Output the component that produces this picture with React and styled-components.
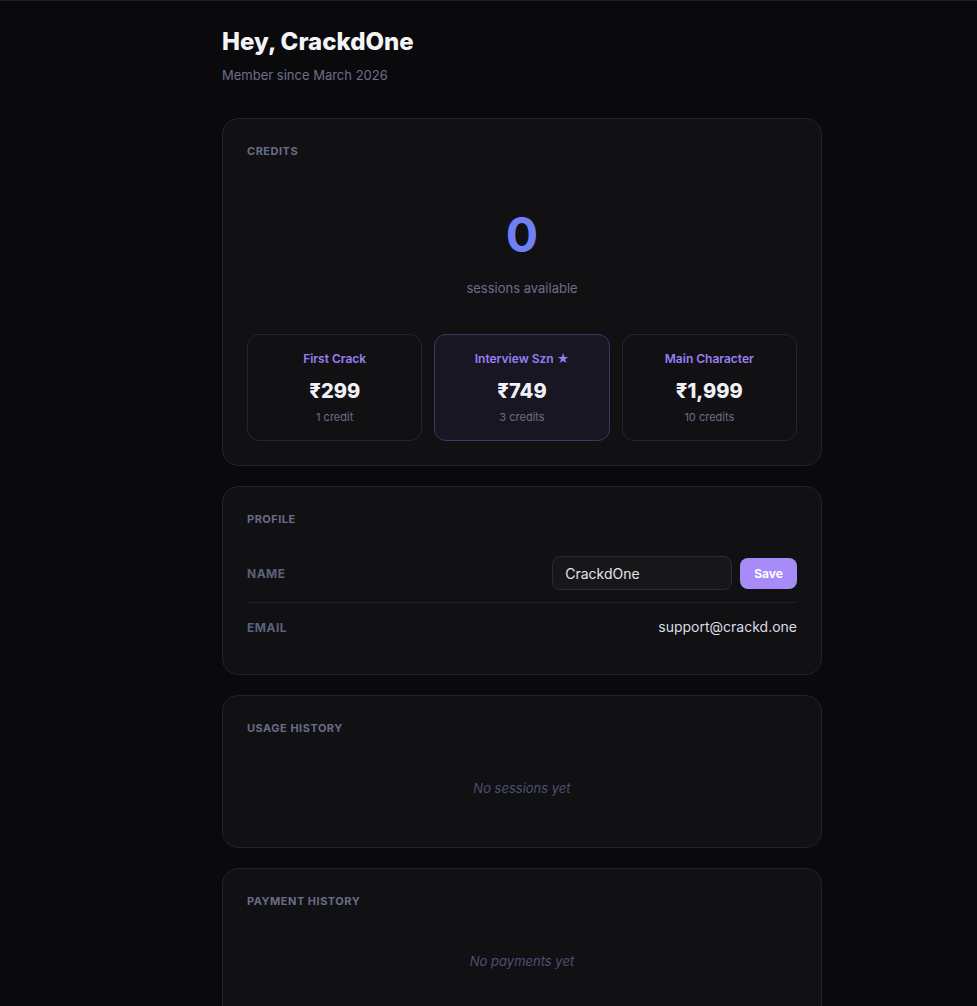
import React from 'react';
import styled, { createGlobalStyle } from 'styled-components';

const GlobalStyle = createGlobalStyle`
  html, body {
    margin: 0;
    padding: 0;
    background: #0a0a0c;
  }
  body {
    border-top: 1px solid #1d1d22;
    font-family: Inter, "Noto Sans", sans-serif;
    color: #e4e4e7;
    min-height: 1006px;
    box-sizing: border-box;
  }
`;

const Page = styled.div`
  padding: 25px 0 40px 222px;
`;

const Main = styled.main`
  width: 600px;
  display: flex;
  flex-direction: column;
  gap: 20px;
`;

const Header = styled.header`
  margin-bottom: 13px;
`;

const Title = styled.h1`
  margin: 0;
  font-size: 24px;
  line-height: 32px;
  font-weight: 800;
  color: #f4f4f7;
`;

const Subtitle = styled.p`
  margin: 7px 0 0;
  font-size: 13px;
  line-height: 20px;
  color: #6b6f87;
`;

const Card = styled.section`
  background: #111114;
  border: 1px solid #222227;
  border-radius: 16px;
  padding: 24px;
`;

const CardLabel = styled.h2`
  margin: 0 0 16px;
  font-size: 11px;
  line-height: 16px;
  font-weight: 700;
  letter-spacing: 0.5px;
  text-transform: uppercase;
  color: #686d87;
`;

const Balance = styled.div`
  display: flex;
  flex-direction: column;
  align-items: center;
  padding: 36px 0 36px;
`;

const BalanceValue = styled.div`
  font-size: 48px;
  line-height: 48px;
  font-weight: 700;
  color: #6f80f5;
`;

const BalanceCaption = styled.div`
  margin-top: 19px;
  font-size: 13px;
  line-height: 20px;
  color: #6b6f87;
`;

const PlanGrid = styled.div`
  display: grid;
  grid-template-columns: repeat(3, 1fr);
  gap: 12px;
`;

const Plan = styled.button`
  display: flex;
  flex-direction: column;
  align-items: center;
  padding: 16px 8px 15px;
  border-radius: 12px;
  font-family: inherit;
  cursor: pointer;
  background: ${p => (p.$featured ? '#181622' : '#111114')};
  border: 1px solid ${p => (p.$featured ? '#3f3763' : '#25252b')};
`;

const PlanName = styled.div`
  font-size: 12px;
  line-height: 16px;
  font-weight: 600;
  color: #9b7ef5;
`;

const PlanPrice = styled.div`
  margin-top: 10px;
  font-size: 20px;
  line-height: 28px;
  font-weight: 800;
  color: #f1f1f5;
`;

const PlanCredits = styled.div`
  margin-top: 4px;
  font-size: 11px;
  line-height: 16px;
  color: #6b6f87;
`;

const Rows = styled.div`
  padding-top: 1px;
`;

const Row = styled.div`
  display: flex;
  align-items: center;
  justify-content: space-between;
  padding: ${p => (p.$last ? '13px 0 11px' : '12px 0')};
  border-bottom: 1px solid ${p => (p.$last ? 'transparent' : '#1f1f24')};
`;

const RowLabel = styled.span`
  font-size: 12px;
  font-weight: 700;
  letter-spacing: 0.5px;
  color: #5c617a;
`;

const RowValue = styled.span`
  font-size: 14px;
  line-height: 22px;
  color: #dcdce4;
`;

const NameForm = styled.div`
  display: flex;
  align-items: center;
  gap: 8px;
`;

const NameInput = styled.input`
  width: 180px;
  height: 34px;
  box-sizing: border-box;
  padding: 0 12px;
  background: #17171a;
  border: 1px solid #2a2a30;
  border-radius: 8px;
  font-family: inherit;
  font-size: 14px;
  color: #e4e4e9;
  outline: none;
`;

const SaveButton = styled.button`
  height: 31px;
  padding: 0 14px;
  border: none;
  border-radius: 8px;
  background: #a78bf9;
  color: #fff;
  font-family: inherit;
  font-size: 12px;
  font-weight: 700;
  cursor: pointer;
`;

const Empty = styled.p`
  margin: 0;
  padding: 26px 0 25px;
  text-align: center;
  font-size: 13px;
  line-height: 20px;
  font-style: italic;
  color: #4b5070;
`;

const plans = [
  { name: 'First Crack', price: '₹299', credits: '1 credit' },
  { name: 'Interview Szn ★', price: '₹749', credits: '3 credits', featured: true },
  { name: 'Main Character', price: '₹1,999', credits: '10 credits' },
];

export default function App() {
  return (
    <>
      <GlobalStyle />
      <Page>
        <Main>
          <Header>
            <Title>Hey, CrackdOne</Title>
            <Subtitle>Member since March 2026</Subtitle>
          </Header>

          <Card>
            <CardLabel>Credits</CardLabel>
            <Balance>
              <BalanceValue>0</BalanceValue>
              <BalanceCaption>sessions available</BalanceCaption>
            </Balance>
            <PlanGrid>
              {plans.map(plan => (
                <Plan key={plan.name} $featured={plan.featured}>
                  <PlanName>{plan.name}</PlanName>
                  <PlanPrice>{plan.price}</PlanPrice>
                  <PlanCredits>{plan.credits}</PlanCredits>
                </Plan>
              ))}
            </PlanGrid>
          </Card>

          <Card>
            <CardLabel>Profile</CardLabel>
            <Rows>
              <Row>
                <RowLabel>NAME</RowLabel>
                <NameForm>
                  <NameInput defaultValue="CrackdOne" />
                  <SaveButton>Save</SaveButton>
                </NameForm>
              </Row>
              <Row $last>
                <RowLabel>EMAIL</RowLabel>
                <RowValue>support@crackd.one</RowValue>
              </Row>
            </Rows>
          </Card>

          <Card>
            <CardLabel>Usage History</CardLabel>
            <Empty>No sessions yet</Empty>
          </Card>

          <Card>
            <CardLabel>Payment History</CardLabel>
            <Empty>No payments yet</Empty>
          </Card>
        </Main>
      </Page>
    </>
  );
}
